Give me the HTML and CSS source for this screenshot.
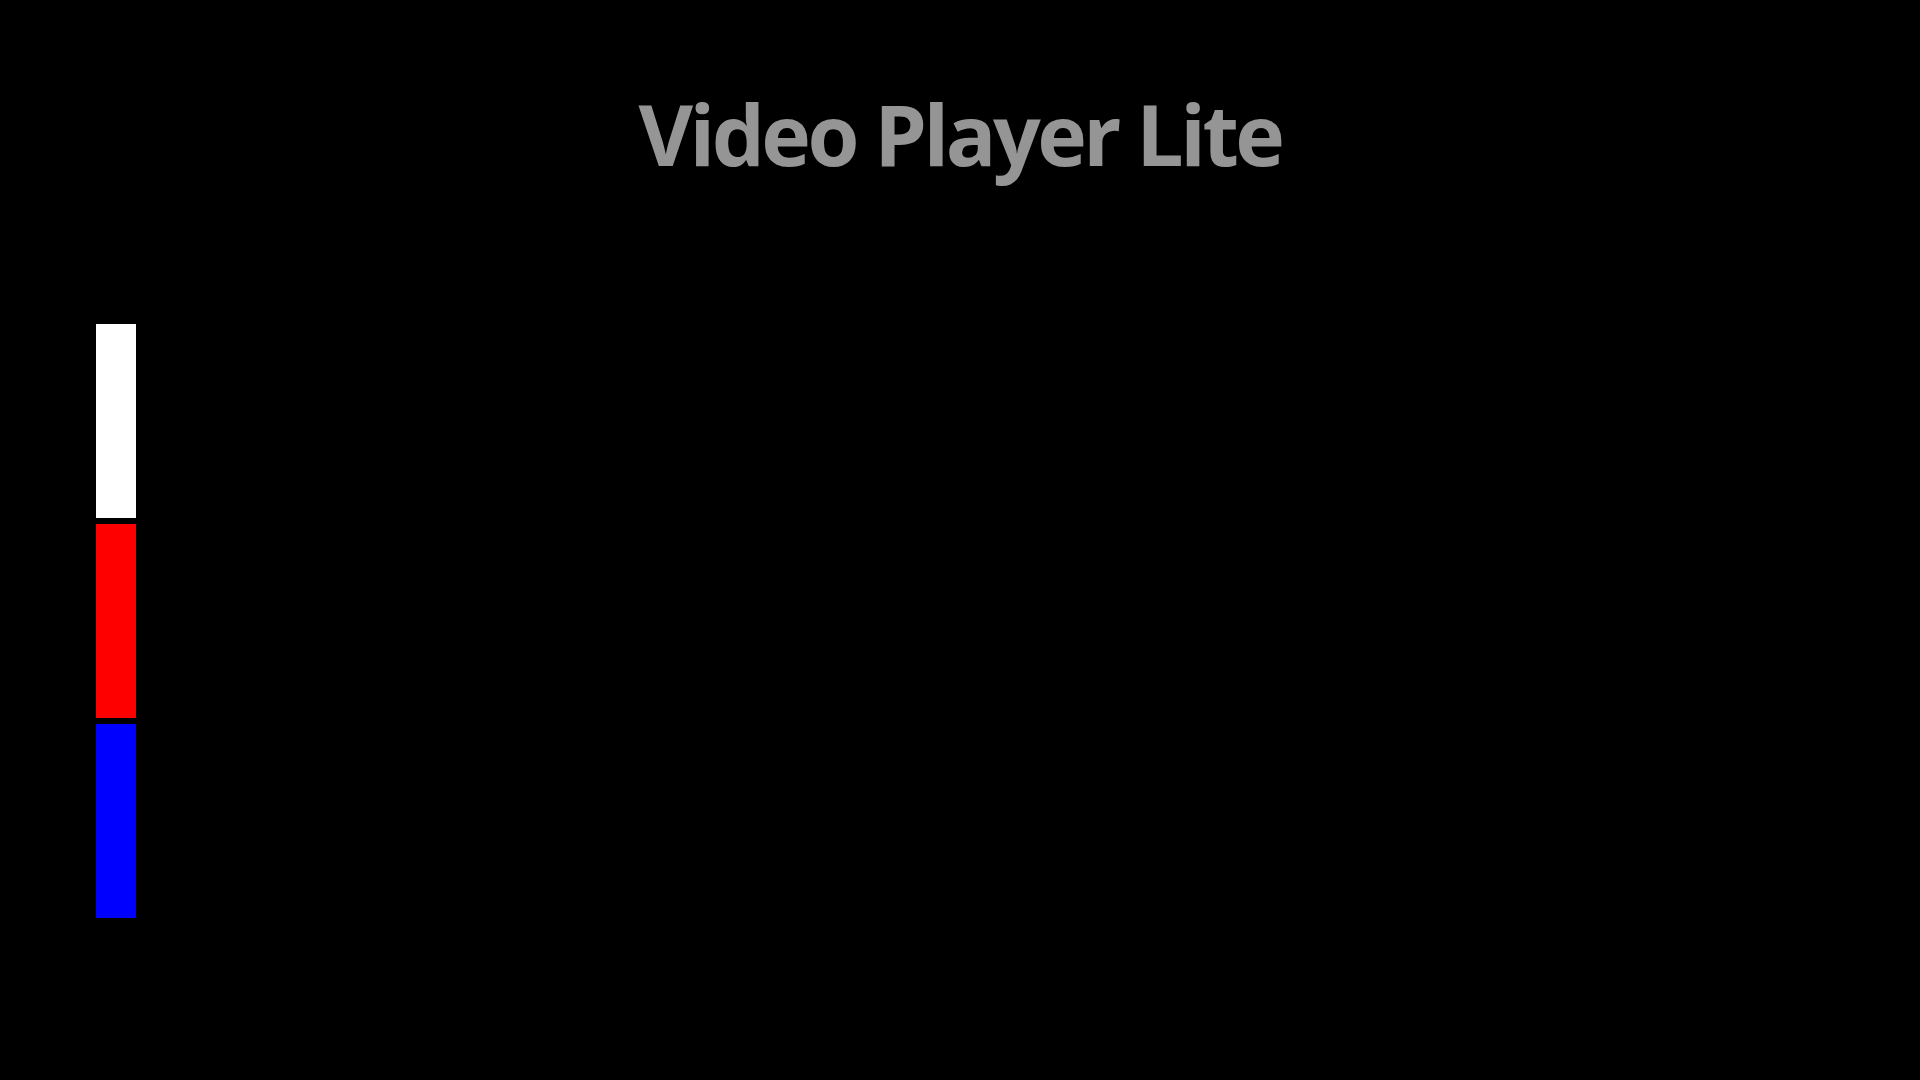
FILE: index.html
```html
<!DOCTYPE html>
<html>
<head>
<meta charset="utf-8">
<link rel="stylesheet" href="styles.css">
</head>
<body>
<div class="screen">
  <h1 class="title">Video Player Lite</h1>
  <div class="bars">
    <div class="bar bar-white"></div>
    <div class="bar bar-red"></div>
    <div class="bar bar-blue"></div>
  </div>
</div>
</body>
</html>
```
FILE: styles.css
```css
html, body {
  margin: 0;
  padding: 0;
  background: #000;
}
.screen {
  width: 1920px;
  height: 1080px;
  background: #000;
  display: flex;
  flex-direction: column;
}
.title {
  margin: 0;
  padding: 84px 0 0 0;
  text-align: center;
  font-family: "Open Sans", sans-serif;
  font-weight: 700;
  font-size: 84px;
  line-height: 100px;
  color: #959595;
  letter-spacing: -3.5px;
  white-space: nowrap;
}
.bars {
  margin-top: 140px;
  margin-left: 96px;
  display: flex;
  flex-direction: column;
  gap: 6px;
}
.bar {
  width: 40px;
  height: 194px;
}
.bar-white { background: #fff; }
.bar-red { background: #f00; }
.bar-blue { background: #00f; }
```
